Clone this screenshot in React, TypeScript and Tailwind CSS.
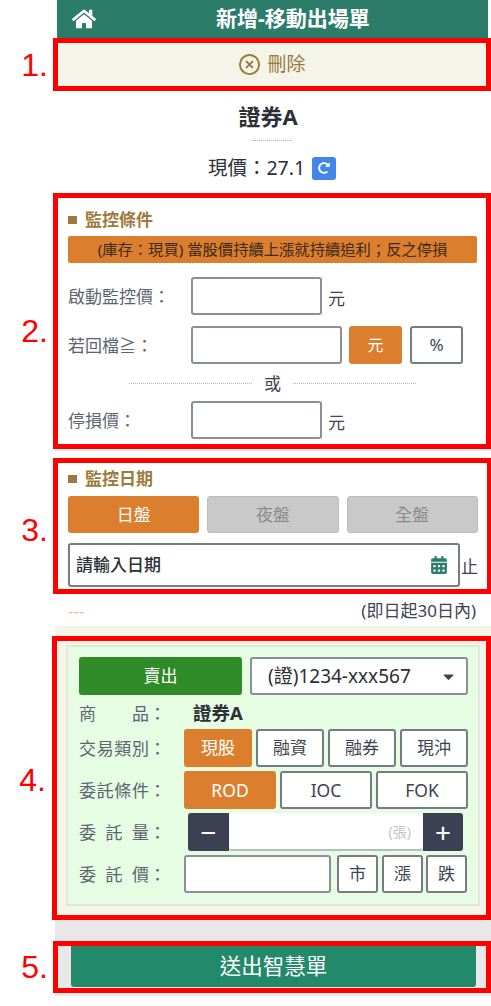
import { FaHome, FaCalendarAlt, FaRedoAlt, FaCaretDown } from 'react-icons/fa'
import { CircleX } from 'lucide-react'

const outlineBtn = 'flex items-center justify-center rounded-[3px] border-2 border-[#767c86] bg-white text-[#3d4450]'
const orangeBtn = 'flex items-center justify-center rounded-[3px] bg-[#db7f2e] text-white'
const greyBtn = 'flex items-center justify-center rounded-[3px] border border-[#bdbdbd] bg-[#c9c9c9] text-[#8a8a8a]'
const field = 'rounded-[3px] border-2 border-[#8a8f98] bg-white'
const labelCls = 'text-[17px] leading-none text-[#5c6470]'

function SideNumber({ n, className = 'w-[53px] pr-[5px]' }: { n: string; className?: string }) {
  return <div className={`flex h-full shrink-0 items-center justify-end font-['Liberation_Sans'] text-[32px] leading-none text-[#f00] ${className}`}>{n}</div>
}

function SectionTitle({ title }: { title: string }) {
  return (
    <div className="flex items-center text-[17px] font-bold leading-none text-[#9c7a3c]">
      <span className="mr-2 h-2 w-[9px] bg-[#9c7a3c]" />
      {title}
    </div>
  )
}

// form label: the characters are spread over a fixed width, colon after it
function SpreadLabel({ chars }: { chars: string[] }) {
  return (
    <span className={`flex w-[105px] items-center ${labelCls}`}>
      <span className="flex w-[70px] justify-between">
        {chars.map(c => <span key={c}>{c}</span>)}
      </span>
      <span>：</span>
    </span>
  )
}

function PriceRow({ label, className }: { label: string; className: string }) {
  return (
    <div className={`flex items-center ${className}`}>
      <span className={`w-[123px] ${labelCls}`}>{label}</span>
      <div className={`h-[38px] w-[131px] ${field}`} />
      <span className="ml-[6px] mt-1 text-[17px] leading-none text-[#3d4450]">元</span>
    </div>
  )
}

export default function App() {
  return (
    <div className="h-[1006px] w-[491px] overflow-hidden bg-white font-['Noto_Sans','Noto_Sans_CJK_TC',sans-serif]">
      <div className="ml-[57px] flex h-[38px] w-[431px] items-center bg-[#2b7d69] text-white">
        <FaHome className="ml-[15px] text-[24px]" />
        <span className="ml-[120px] text-[21px] font-bold">新增-移動出場單</span>
      </div>

      <div className="flex h-[53px]">
        <SideNumber n="1." />
        <div className="flex flex-1 items-center justify-center border-[5px] border-[#f00] bg-[#f4f4e8] text-[#9c7a3c]">
          <CircleX size={23} strokeWidth={2} />
          <span className="ml-[6px] text-[19px]">刪除</span>
        </div>
      </div>

      <div className="ml-[53px] flex h-[102px] flex-col items-center text-[#2b2f36]">
        <div className="mr-[8px] mt-[11px] text-[22px] font-bold leading-[28px]">證券A</div>
        <div className="mt-[10px] h-[3px] w-[40px] border-t border-dotted border-[#b0b0b0]" />
        <div className="mt-[13px] flex items-center text-[19.5px] leading-[24px]">
          現價：27.1
          <span className="ml-[7px] flex h-[23px] w-[24px] items-center justify-center rounded-[3px] bg-[#4286e8] text-white">
            <FaRedoAlt className="text-[12px]" />
          </span>
        </div>
      </div>

      <div className="flex h-[256px]">
        <SideNumber n="2." className="w-[53px] pr-[5px] pt-[20px]" />
        <div className="flex-1 border-[5px] border-[#f00] bg-white pl-[10px] pr-[9px] pt-[13px]">
          <SectionTitle title="監控條件" />
          <div className="mt-[8px] flex h-[27px] items-center justify-center rounded-[2px] bg-[#db7f2e] text-[15.3px] text-[#3a2a18]">
            (庫存：現買) 當股價持續上漲就持續追利；反之停損
          </div>
          <PriceRow label="啟動監控價：" className="mt-[14px]" />
          <div className="mt-[11px] flex items-center">
            <span className={`w-[123px] ${labelCls}`}>若回檔≧：</span>
            <div className={`h-[38px] w-[151px] ${field}`} />
            <div className={`ml-[7px] h-[38px] w-[53px] text-[16px] ${orangeBtn}`}>元</div>
            <div className={`ml-[8px] h-[38px] w-[53px] text-[17px] ${outlineBtn}`}>%</div>
          </div>
          <div className="ml-[61px] mt-[9px] flex h-[21px] w-[287px] items-center text-[17px] leading-none text-[#3d4450]">
            <span className="h-px flex-1 border-t border-dotted border-[#b5b5b5]" />
            <span className="mx-[12px]">或</span>
            <span className="h-px flex-1 border-t border-dotted border-[#b5b5b5]" />
          </div>
          <PriceRow label="停損價：" className="mt-[7px]" />
        </div>
      </div>

      <div className="ml-[55px] h-[9px] border-t-[2px] border-[#e8e8e8]" />

      <div className="flex h-[136px]">
        <SideNumber n="3." className="w-[53px] pr-[5px] pt-[8px]" />
        <div className="flex-1 border-[5px] border-[#f00] bg-white pl-[10px] pr-[9px] pt-[7px]">
          <SectionTitle title="監控日期" />
          <div className="mt-[9px] grid grid-cols-3 gap-2">
            <div className={`h-[37px] text-[17px] ${orangeBtn}`}>日盤</div>
            <div className={`h-[37px] text-[17px] ${greyBtn}`}>夜盤</div>
            <div className={`h-[37px] text-[17px] ${greyBtn}`}>全盤</div>
          </div>
          <div className="mt-[10px] flex items-center">
            <div className="flex h-[44px] w-[392px] items-center justify-between rounded-[3px] border-2 border-[#767c86] bg-white pl-[6px] pr-[10px] text-[17px] font-medium text-[#2b2f36]">
              請輸入日期
              <FaCalendarAlt className="text-[18px] text-[#2b7d69]" />
            </div>
            <span className="ml-[1px] mt-[3px] text-[17px] leading-none text-[#3d4450]">止</span>
          </div>
        </div>
      </div>

      <div className="ml-[55px] flex h-[32px] items-center justify-between pl-[13px] pr-[15px]">
        <span className="text-[17px] leading-none text-[#efb98a]">---</span>
        <span className="text-[17px] leading-none text-[#3d4450]">(即日起30日內)</span>
      </div>

      <div className="flex h-[10px]">
        <div className="w-[55px]" />
        <div className="flex-1 bg-[#f4f4e8]" />
      </div>

      <div className="flex h-[284px]">
        <SideNumber n="4." className="w-[52px] pr-[6px] pt-[4px]" />
        <div className="flex-1 border-[5px] border-[#f00] bg-[#f4f4e8] pl-[9px] pr-[6px] pt-[4px]">
          <div className="h-[261px] w-[414px] border-2 border-[#e3e6dd] bg-[#e6fde3] pl-[11px] pr-[10px] pt-[10px]">
            <div className="flex gap-2">
              <div className="flex h-[38px] w-[163px] items-center justify-center rounded-[3px] bg-[#2e8b28] text-[17px] text-white">賣出</div>
              <div className={`flex h-[38px] flex-1 items-center justify-between pl-[16px] pr-[9px] text-[19px] text-[#2b2f36] ${field}`}>
                (證)1234-xxx567
                <FaCaretDown className="text-[17px] text-[#3d4450]" />
              </div>
            </div>
            <div className="mt-[6px] flex h-[24px] items-center">
              <SpreadLabel chars={['商', '品']} />
              <span className="ml-[9px] text-[18.5px] font-bold leading-none text-[#2b2f36]">證券A</span>
            </div>
            <div className="mt-[4px] flex items-center">
              <SpreadLabel chars={['交', '易', '類', '別']} />
              <div className="grid flex-1 grid-cols-4 gap-1">
                <div className={`h-[38px] text-[17px] ${orangeBtn}`}>現股</div>
                <div className={`h-[38px] text-[17px] ${outlineBtn}`}>融資</div>
                <div className={`h-[38px] text-[17px] ${outlineBtn}`}>融券</div>
                <div className={`h-[38px] text-[17px] ${outlineBtn}`}>現沖</div>
              </div>
            </div>
            <div className="mt-[4px] flex items-center">
              <SpreadLabel chars={['委', '託', '條', '件']} />
              <div className="grid flex-1 grid-cols-3 gap-1">
                <div className={`h-[38px] text-[17.5px] ${orangeBtn}`}>ROD</div>
                <div className={`h-[38px] text-[17.5px] ${outlineBtn}`}>IOC</div>
                <div className={`h-[38px] text-[17.5px] ${outlineBtn}`}>FOK</div>
              </div>
            </div>
            <div className="mt-[4px] flex items-center">
              <SpreadLabel chars={['委', '託', '量']} />
              <div className="ml-[4px] flex w-[275px]">
                <div className="flex h-[38px] w-[41px] items-center justify-center rounded-l-[3px] bg-[#3b4152] text-[28px] leading-none text-white">−</div>
                <div className="flex h-[38px] flex-1 items-center justify-end rounded-b-[3px] border-b-2 border-[#b8bcc2] bg-white pr-[12px] text-[14px] text-[#c4c4c4]">(張)</div>
                <div className="flex h-[38px] w-[40px] items-center justify-center rounded-r-[3px] bg-[#3b4152] text-[28px] leading-none text-white">+</div>
              </div>
            </div>
            <div className="mt-[4px] flex items-center">
              <SpreadLabel chars={['委', '託', '價']} />
              <div className={`h-[38px] w-[147px] ${field}`} />
              <div className={`ml-[6px] h-[38px] w-[41px] text-[17px] ${outlineBtn}`}>市</div>
              <div className={`ml-[4px] h-[38px] w-[41px] text-[17px] ${outlineBtn}`}>漲</div>
              <div className={`ml-[3px] h-[38px] w-[41px] text-[17px] ${outlineBtn}`}>跌</div>
            </div>
          </div>
        </div>
      </div>

      <div className="ml-[55px] h-[21px] bg-[#e8e8e8]" />

      <div className="flex h-[52px]">
        <SideNumber n="5." />
        <div className="flex-1 border-[5px] border-[#f00] bg-[#e8e8e8] pl-[13px] pr-[10px]">
          <div className="flex h-[41px] items-center justify-center rounded-b-[3px] bg-[#22896a] text-[21.5px] text-white">送出智慧單</div>
        </div>
      </div>

      <div className="ml-[55px] h-[3px] bg-[#e8e8e8]" />
    </div>
  )
}
